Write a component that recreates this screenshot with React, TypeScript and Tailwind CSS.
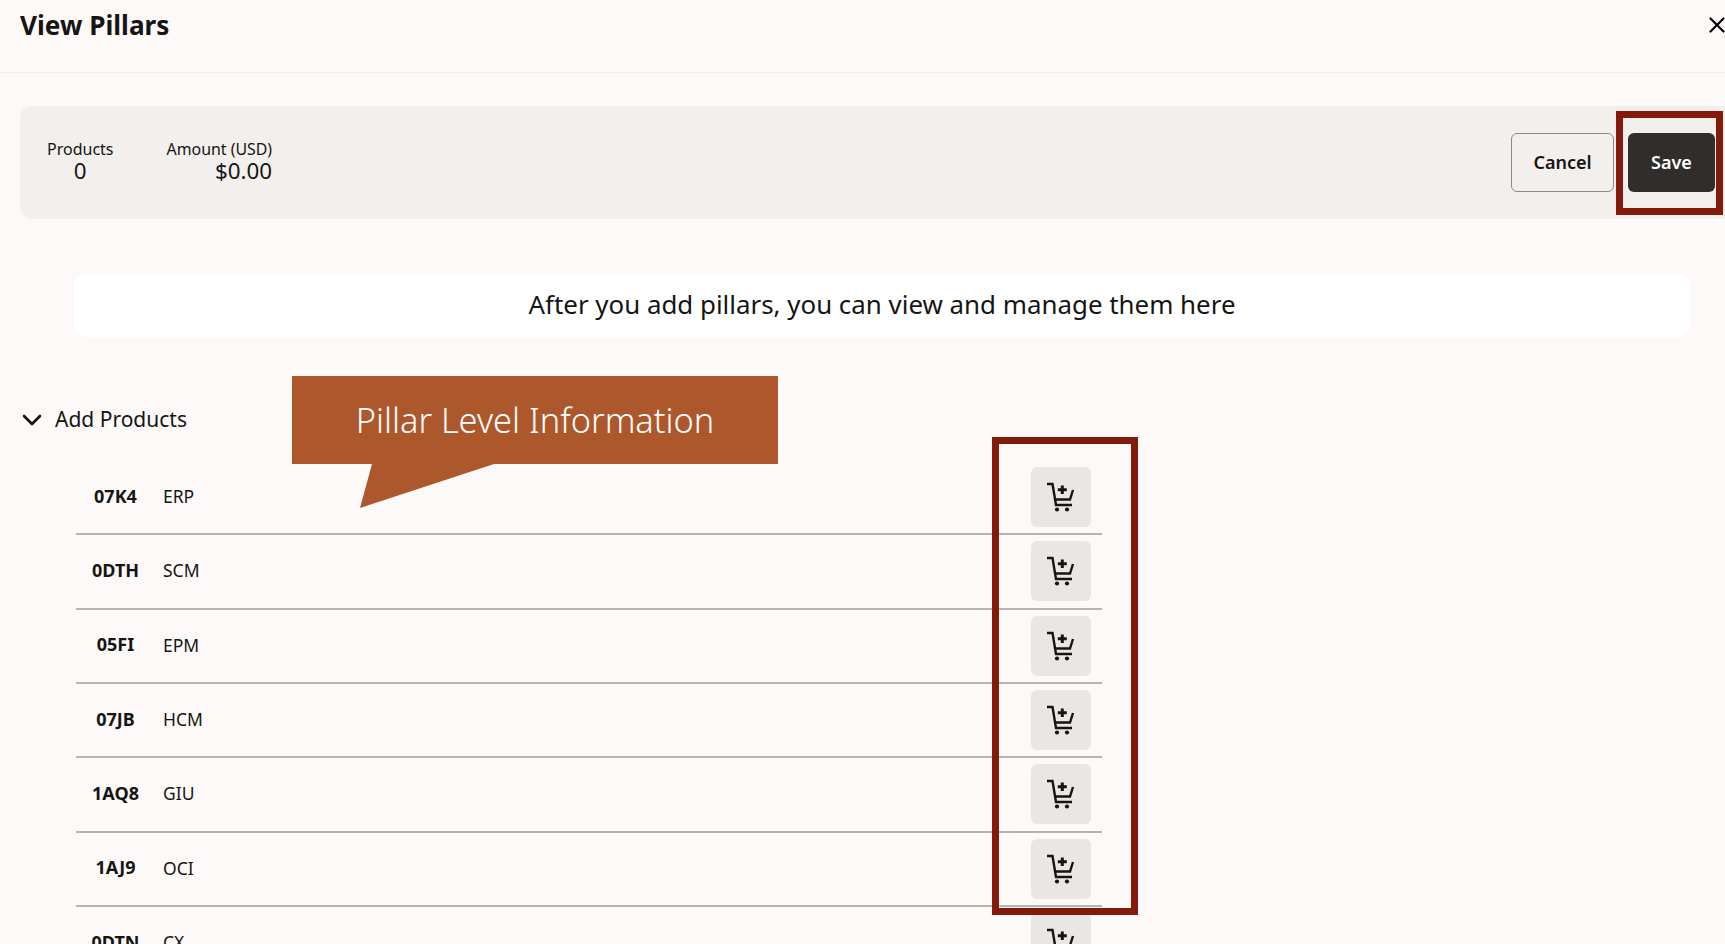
import { ChevronDown, X } from "lucide-react";

const products = [
  ["07K4", "ERP"],
  ["0DTH", "SCM"],
  ["05FI", "EPM"],
  ["07JB", "HCM"],
  ["1AQ8", "GIU"],
  ["1AJ9", "OCI"],
  ["0DTN", "CX"],
];

function CartPlus() {
  return (
    <svg width="40" height="40" viewBox="1 0 40 40" fill="none" stroke="#161513" strokeWidth="2.4">
      <path d="M7 7h5.5L16 28H32" />
      <path d="M15 22.5h15L33 13" />
      <path d="M22.3 8.5v8.5M17.8 12.7h9" strokeWidth="3" />
      <circle cx="17" cy="32.5" r="2.1" fill="#161513" stroke="none" />
      <circle cx="27" cy="32.5" r="2.1" fill="#161513" stroke="none" />
    </svg>
  );
}

function ProductRow({ code, name }: { code: string; name: string }) {
  return (
    <div className="flex h-[74.33px] shrink-0 items-center border-b-2 border-[#b7b5b3]">
      <div className="mb-[2px] w-[79px] text-center text-[18px] font-bold text-[#161513]">{code}</div>
      <div className="mb-[2px] ml-2 flex-1 text-[17.5px] text-[#161513]">{name}</div>
      <button className="mr-[11px] flex h-[60px] w-[60px] items-center justify-center rounded-md bg-[#e9e7e6]">
        <CartPlus />
      </button>
    </div>
  );
}

export default function App() {
  return (
    <div className="relative h-[944px] w-[1725px] overflow-hidden bg-[#fcf9f8] font-['Noto_Sans',sans-serif] text-[#161513]">
      <header className="flex h-[73px] items-start justify-between border-b border-[#f1efed] pl-5">
        <h1 className="mt-[6px] text-[26.2px] leading-[38px] font-bold">View Pillars</h1>
        <button className="mt-[12px] -mr-[5px] text-black">
          <X size={26} strokeWidth={2} />
        </button>
      </header>

      <section className="mt-[33px] ml-5 flex h-[113px] items-center justify-between rounded-l-xl bg-[#f2efed] pr-[10px] pl-[27px]">
        <div className="flex gap-[53px] pb-[6px]">
          <div className="flex flex-col items-center">
            <span className="text-[16px] leading-[22px]">Products</span>
            <span className="text-[22.4px] leading-[22px]">0</span>
          </div>
          <div className="flex flex-col items-end">
            <span className="text-[15.9px] leading-[22px]">Amount (USD)</span>
            <span className="text-[22.4px] leading-[22px]">$0.00</span>
          </div>
        </div>
        <div className="flex gap-[14px]">
          <button className="h-[59px] w-[103px] rounded-md border border-[#8c8a87] text-[18px] font-semibold">
            Cancel
          </button>
          <button className="h-[59px] w-[87px] rounded-md bg-[#312d2a] text-[18px] font-semibold text-white">
            Save
          </button>
        </div>
      </section>

      <div className="mt-[54px] ml-[75px] flex h-[64px] w-[1614px] items-center justify-center rounded-xl bg-white pb-[2px] text-[25.9px]">
        After you add pillars, you can view and manage them here
      </div>

      <div className="mt-[60px] ml-[16px] flex h-[46px] items-center gap-[7px] text-[21px]">
        <ChevronDown size={32} strokeWidth={2} />
        <span>Add Products</span>
      </div>

      <div className="mt-[18px] ml-[76px] flex w-[1026px] flex-col">
        {products.map(([code, name]) => (
          <ProductRow key={code} code={code} name={name} />
        ))}
      </div>

      {/* annotations laid over the page */}
      <div className="absolute top-[376px] left-[292px] flex h-[88px] w-[486px] items-center justify-center bg-[#ad572c] text-[34.4px] font-light text-white">
        Pillar Level Information
      </div>
      <svg className="absolute top-[464px] left-[360px]" width="134" height="44" viewBox="0 0 134 44">
        <path d="M12 0H134L0 44Z" fill="#ad572c" />
      </svg>
      <div className="absolute top-[111px] left-[1616px] h-[104px] w-[107px] border-[7px] border-[#831a0c]" />
      <div className="absolute top-[437px] left-[992px] h-[478px] w-[146px] border-[7px] border-[#831a0c]" />
    </div>
  );
}
